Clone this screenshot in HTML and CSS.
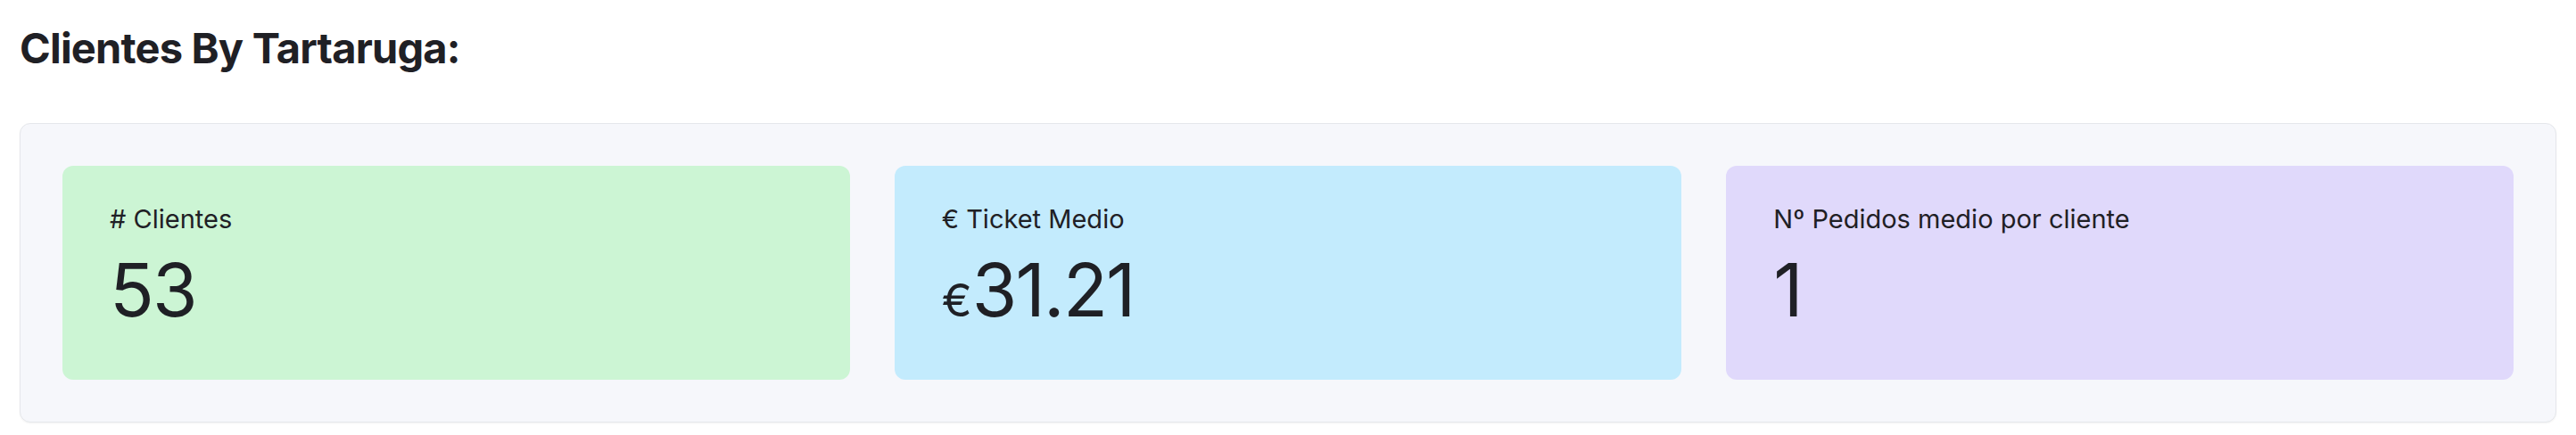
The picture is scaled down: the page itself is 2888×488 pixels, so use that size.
FILE: index.html
```html
<!DOCTYPE html>
<html lang="es">
<head>
<meta charset="utf-8">
<title>Clientes By Tartaruga</title>
<link rel="stylesheet" href="styles.css">
</head>
<body>
<main class="page">
  <h1 class="title">Clientes By Tartaruga:</h1>
  <section class="panel">
    <div class="card card-green">
      <p class="label"># Clientes</p>
      <p class="metric">53</p>
    </div>
    <div class="card card-blue">
      <p class="label">€ Ticket Medio</p>
      <p class="metric"><span class="currency">€</span>31.21</p>
    </div>
    <div class="card card-violet">
      <p class="label">Nº Pedidos medio por cliente</p>
      <p class="metric">1</p>
    </div>
  </section>
</main>
</body>
</html>
```
FILE: styles.css
```css
* { box-sizing: border-box; }
html, body { margin: 0; padding: 0; background: #ffffff; }
body {
  font-family: Inter, "Noto Sans", "Liberation Sans", sans-serif;
  color: #1f2025;
}
.page {
  padding: 24px 22px 14px 22px;
}
.title {
  margin: 0 0 54px 0;
  font-size: 47px;
  line-height: 60px;
  font-weight: 700;
  letter-spacing: -0.8px;
}
.panel {
  display: grid;
  grid-template-columns: repeat(3, 1fr);
  gap: 50px;
  padding: 47px;
  background: #f6f7fb;
  border: 1px solid #e5e7eb;
  border-radius: 12px;
  box-shadow: 0 1px 2px rgba(0,0,0,0.05);
}
.card {
  border-radius: 12px;
  padding: 40px 53px 59px 53px;
}
.card-green { background: #ccf5d4; }
.card-blue { background: #c3ebfd; }
.card-violet { background: #e0d9fb; }
.label {
  margin: 0;
  font-size: 29px;
  line-height: 40px;
  font-weight: 400;
}
.metric {
  margin: 19px 0 0 0;
  font-size: 82px;
  line-height: 82px;
  font-weight: 400;
  letter-spacing: -1.8px;
}
.currency {
  font-size: 51px;
  line-height: 0;
  margin-right: 0;
  letter-spacing: 0;
}
```
